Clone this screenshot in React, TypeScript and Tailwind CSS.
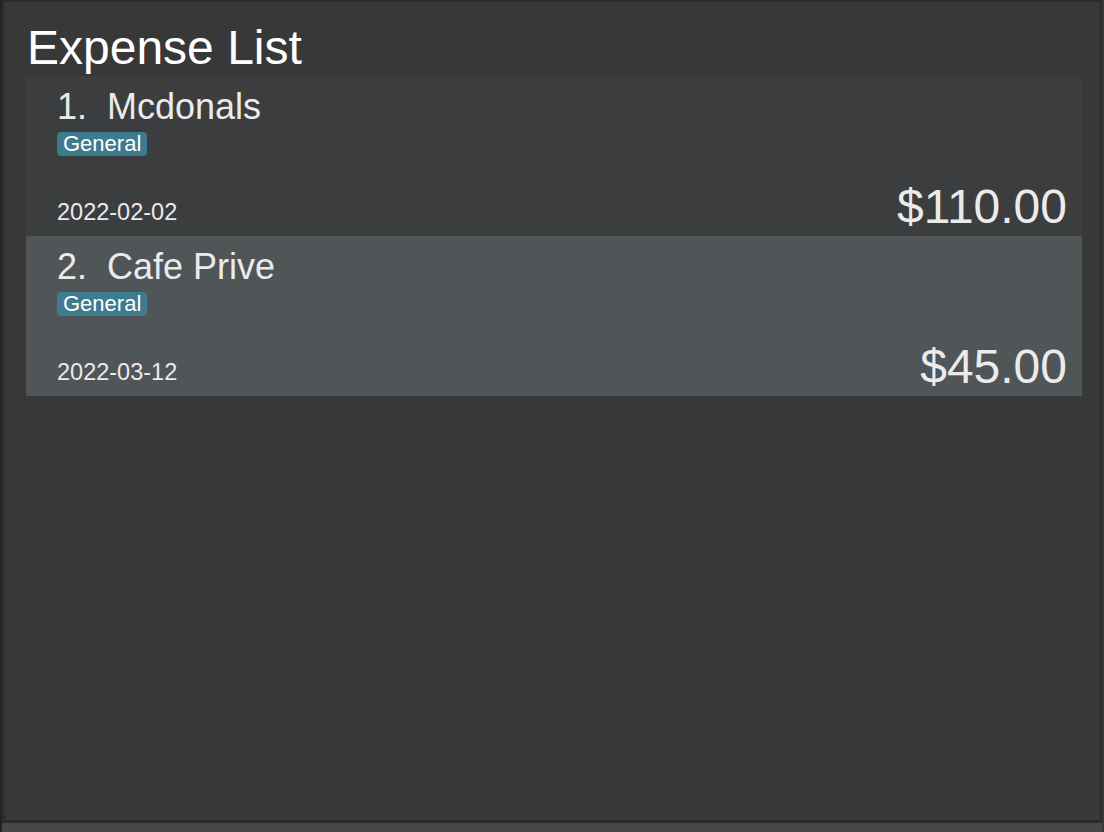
const expenses = [
  { id: 1, name: 'Mcdonals', tag: 'General', date: '2022-02-02', amount: '$110.00' },
  { id: 2, name: 'Cafe Prive', tag: 'General', date: '2022-03-12', amount: '$45.00' },
]

const FONT = { fontFamily: '"Liberation Sans", Arial, sans-serif' }

function ExpenseCard({ expense, selected }: { expense: typeof expenses[number]; selected: boolean }) {
  return (
    <div className={`h-[160px] flex flex-col pl-[31px] pr-[15px] pt-[10px] ${selected ? 'bg-[#505558]' : 'bg-[#3c3d3f]'}`}>
      <div className="flex items-baseline gap-[20px] text-[36px] leading-[41px] text-[#ebebeb]">
        <span>{expense.id}.</span>
        <span>{expense.name}</span>
      </div>
      <div className="flex mt-[5px]">
        <span className="h-[24px] px-[6px] rounded-[4px] bg-[#3d7b8f] text-white text-[22px] leading-[24px]">
          {expense.tag}
        </span>
      </div>
      <div className="flex-1" />
      <div className="flex items-end justify-between pb-[5px]">
        <span className="text-[23.5px] leading-[24px] mb-[7px] text-[#ebebeb]">{expense.date}</span>
        <span className="text-[48px] leading-[48px] text-[#ebebeb]">{expense.amount}</span>
      </div>
    </div>
  )
}

export default function App() {
  return (
    <div className="w-[1104px] h-[832px] flex bg-[#383838] overflow-hidden" style={FONT}>
      <div className="w-[2px] bg-[#1e2428]" />
      <div className="flex-1 flex flex-col">
        <div className="h-[823px] flex flex-col bg-[#383838] border-l-[3px] border-l-[#2e2e2e] border-t-2 border-t-[#2b2b2b] border-r-2 border-r-[#2b2b2b] border-b-[3px] border-b-[#2b2b2b] pl-[21px] pr-[18px]">
          <h1 className="text-[48px] leading-[48px] text-white mt-[22px] pl-[1px]">Expense List</h1>
          <div className="mt-[4px] flex flex-col">
            {expenses.map((e, i) => (
              <ExpenseCard key={e.id} expense={e} selected={i === 1} />
            ))}
          </div>
        </div>
        <div className="flex-1 bg-[#474747]" />
      </div>
      <div className="w-[2px] bg-[#383838]" />
    </div>
  )
}
